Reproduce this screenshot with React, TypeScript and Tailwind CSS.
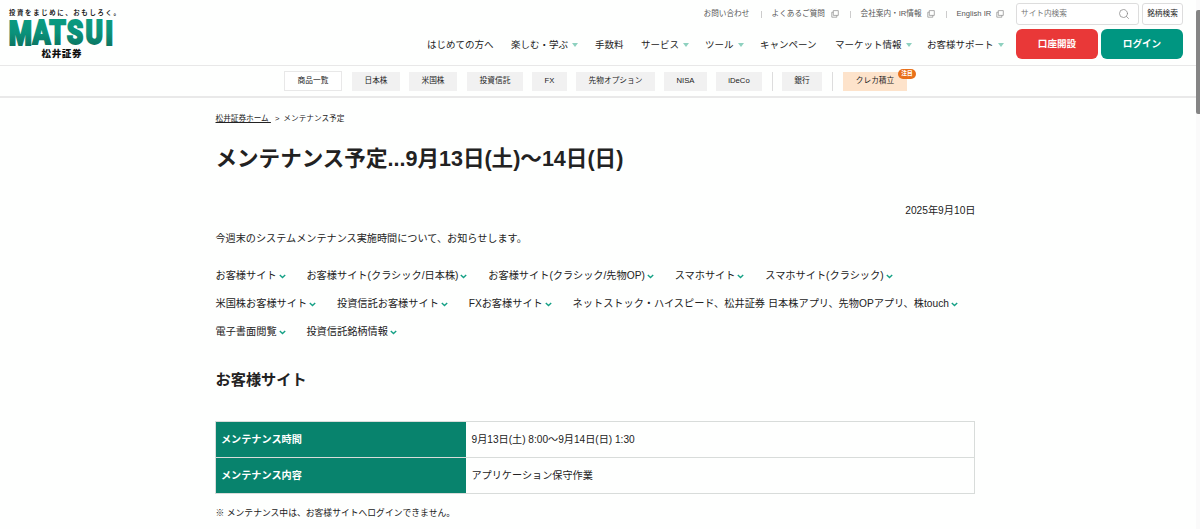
import { Search } from "lucide-react";

interface NavItem {
  label: string;
  gap: string;
  hasMenu?: boolean;
}

const navItems: NavItem[] = [
  { label: "はじめての方へ", gap: "w-[84px]" },
  { label: "楽しむ・学ぶ", gap: "w-[84px]", hasMenu: true },
  { label: "手数料", gap: "w-[46px]" },
  { label: "サービス", gap: "w-[64px]", hasMenu: true },
  { label: "ツール", gap: "w-[55px]", hasMenu: true },
  { label: "キャンペーン", gap: "w-[75px]" },
  { label: "マーケット情報", gap: "w-[92px]", hasMenu: true },
  { label: "お客様サポート", gap: "w-[89px]", hasMenu: true },
];

const products = [
  { label: "日本株", size: "w-12 ml-[10px]" },
  { label: "米国株", size: "w-12 ml-[9px]" },
  { label: "投資信託", size: "w-14 ml-[10px]" },
  { label: "FX", size: "w-[35px] ml-[9px]" },
  { label: "先物オプション", size: "w-[79px] ml-[9px]" },
  { label: "NISA", size: "w-[43px] ml-[9px]" },
  { label: "iDeCo", size: "w-[46px] ml-[9px]" },
];

const anchorRows = [
  [
    "お客様サイト",
    "お客様サイト(クラシック/日本株)",
    "お客様サイト(クラシック/先物OP)",
    "スマホサイト",
    "スマホサイト(クラシック)",
  ],
  [
    "米国株お客様サイト",
    "投資信託お客様サイト",
    "FXお客様サイト",
    "ネットストック・ハイスピード、松井証券 日本株アプリ、先物OPアプリ、株touch",
  ],
  ["電子書面閲覧", "投資信託銘柄情報"],
];

const schedule = [
  { title: "メンテナンス時間", value: "9月13日(土) 8:00～9月14日(日) 1:30" },
  { title: "メンテナンス内容", value: "アプリケーション保守作業" },
];

function Logo() {
  return (
    <svg width="120" height="62" viewBox="0 0 120 62" className="block">
      <defs>
        <linearGradient id="logo" gradientUnits="userSpaceOnUse" x1="0" y1="20" x2="0" y2="46">
          <stop offset="0" stopColor="#0a9a80" />
          <stop offset="0.5" stopColor="#0a917a" />
          <stop offset="1" stopColor="#0b7561" />
        </linearGradient>
      </defs>
      <text x="9" y="14.5" fontSize="6.4" fontWeight="700" fill="#222" textLength="111">
        投資をまじめに、おもしろく。
      </text>
      <text
        transform="scale(.8 1)"
        x="11 40.5 61.5 83.5 107 131.5"
        y="45.5 44.5 44 44 44.5 45.5"
        fill="url(#logo)"
        stroke="url(#logo)"
        strokeWidth="1.8"
        fontFamily="Roboto"
        fontWeight="900"
        fontSize="33"
      >
        MATSUI
      </text>
      <text x="41.5" y="57" fontSize="9.5" fontWeight="900" fill="#111" textLength="40">
        松井証券
      </text>
    </svg>
  );
}

function WindowIcon() {
  return (
    <svg width="8" height="8" viewBox="0 0 8 8" fill="none" stroke="#8a8a8a" strokeWidth="0.7">
      <path d="M2.3.6h5v4.8h-5z" />
      <path d="M2.3 2.2H.8v5h5V5.4" />
    </svg>
  );
}

function ChevronIcon() {
  return (
    <svg
      width="7"
      height="5"
      viewBox="0 0 7 5"
      fill="none"
      stroke="#14a085"
      strokeWidth="1.4"
      className="ml-[2px] mt-[1px]"
    >
      <path d="M.8 1l2.7 2.6L6.2 1" />
    </svg>
  );
}

function Header() {
  return (
    <header className="h-[98px] border-b-2 border-[#e9e9e9]">
      <div className="flex h-[66px] border-b border-[#e8e8e8]">
        <Logo />
        <div className="flex-1">
          <div className="flex h-[28px] items-center justify-end pr-[13px] text-[7.65px] text-[#555]">
            <span className="w-[57px]">お問い合わせ</span>
            <span className="h-[7px] w-[11px] border-l border-[#ccc]" />
            <span className="flex w-[78px] items-center justify-between pr-[11px]">
              よくあるご質問 <WindowIcon />
            </span>
            <span className="h-[7px] w-[11px] border-l border-[#ccc]" />
            <span className="flex w-[85px] items-center justify-between pr-[11px]">
              会社案内・IR情報 <WindowIcon />
            </span>
            <span className="h-[7px] w-[11px] border-l border-[#ccc]" />
            <span className="flex w-[59.5px] items-center justify-between pr-[12px]">
              English IR <WindowIcon />
            </span>
            <div className="mr-[3px] flex h-[22px] w-[123px] items-center justify-between rounded-[3px] border border-[#ddd] bg-white pl-[4px] pr-[8px] text-[#777]">
              サイト内検索
              <Search className="size-[12px] text-[#888]" strokeWidth={1.5} />
            </div>
            <button className="h-[22px] w-[41px] whitespace-nowrap rounded-[3px] border border-[#ddd] bg-white text-[#222]">
              銘柄検索
            </button>
          </div>
          <div className="flex h-[32px] items-center justify-end pr-[13px] text-[9.5px] text-[#222]">
            {navItems.map((item) => (
              <span
                key={item.label}
                className={`flex items-center whitespace-nowrap pt-[2px] ${item.gap}`}
              >
                {item.label}
                {item.hasMenu && (
                  <span className="ml-[4px] border-x-[3px] border-t-[4px] border-x-transparent border-t-[#8ed1bf]" />
                )}
              </span>
            ))}
            <button className="mr-[3px] h-[30px] w-[82px] rounded-[6px] bg-[#e93838] text-[9.6px] font-bold text-white">
              口座開設
            </button>
            <button className="h-[30px] w-[82px] rounded-[6px] bg-[#009681] text-[9.6px] font-bold text-white">
              ログイン
            </button>
          </div>
        </div>
      </div>
      <nav className="flex h-[30px] items-center pl-[284px] text-[7.7px] text-[#222]">
        <span className="flex h-5 w-[58px] items-center justify-center border border-[#e8e8e8] bg-white">
          商品一覧
        </span>
        {products.map((product) => (
          <span
            key={product.label}
            className={`flex h-[19px] items-center justify-center bg-[#f1f1f1] ${product.size}`}
          >
            {product.label}
          </span>
        ))}
        <span className="ml-[10px] h-[19px] w-px bg-[#ddd]" />
        <span className="ml-[9px] flex h-[19px] w-10 items-center justify-center bg-[#f1f1f1]">
          銀行
        </span>
        <span className="ml-[10px] h-[19px] w-px bg-[#ddd]" />
        <span className="relative ml-[10px] flex h-[19px] w-16 items-center justify-center bg-[#fde3cb]">
          クレカ積立
          <span className="absolute -right-[9px] -top-[3px] flex h-[10px] w-[18px] items-center justify-center rounded-full bg-[#e8701a] text-[5.7px] font-bold text-white">
            注目
          </span>
        </span>
      </nav>
    </header>
  );
}

export default function App() {
  return (
    <div className="flex h-[529px] w-[1200px] overflow-hidden bg-[#fefffe] font-['Liberation_Sans','Noto_Sans_CJK_JP',sans-serif] text-[10.15px] text-[#222]">
      <div className="w-[1196px]">
        <Header />
        <main className="ml-[215.5px] w-[760px] pt-px">
          <div className="flex h-[40px] items-center text-[7.65px]">
            <span className="whitespace-pre underline">松井証券ホーム </span>
            <span className="mx-[4px]">&gt;</span>
            <span>メンテナンス予定</span>
          </div>
          <h1 className="flex h-[41px] items-center text-[21.55px] font-bold">
            メンテナンス予定...9月13日(土)～14日(日)
          </h1>
          <p className="mt-[21px] flex h-[20px] items-center justify-end text-[10.2px]">
            2025年9月10日
          </p>
          <p className="mt-[8px] flex h-[20px] items-center">
            今週末のシステムメンテナンス実施時間について、お知らせします。
          </p>
          <div className="mt-[13px] text-[10.2px]">
            {anchorRows.map((row) => (
              <div key={row[0]} className="flex h-[28px] items-center gap-[20.8px]">
                {row.map((label) => (
                  <a key={label} className="flex items-center whitespace-nowrap">
                    {label}
                    <ChevronIcon />
                  </a>
                ))}
              </div>
            ))}
          </div>
          <h2 className="mt-[20px] flex h-[28px] items-center text-[15.2px] font-bold">
            お客様サイト
          </h2>
          <table className="mt-[27px] w-full -ml-[0.5px] border-collapse border border-[#d8dcda]">
            <tbody>
              {schedule.map((row) => (
                <tr key={row.title} className="h-[36px] border-b border-[#d8dcda]">
                  <th className="w-[250px] bg-[#08836d] pl-[5px] text-left text-white">
                    {row.title}
                  </th>
                  <td className="pl-[6px]">{row.value}</td>
                </tr>
              ))}
            </tbody>
          </table>
          <p className="mt-[13px] text-[8.8px]">
            ※ メンテナンス中は、お客様サイトへログインできません。
          </p>
        </main>
      </div>
      <div className="w-1 bg-[#fafafa] pt-[10px]">
        <div className="h-[104px] rounded-l-[2px] bg-[#858585]" />
      </div>
    </div>
  );
}
